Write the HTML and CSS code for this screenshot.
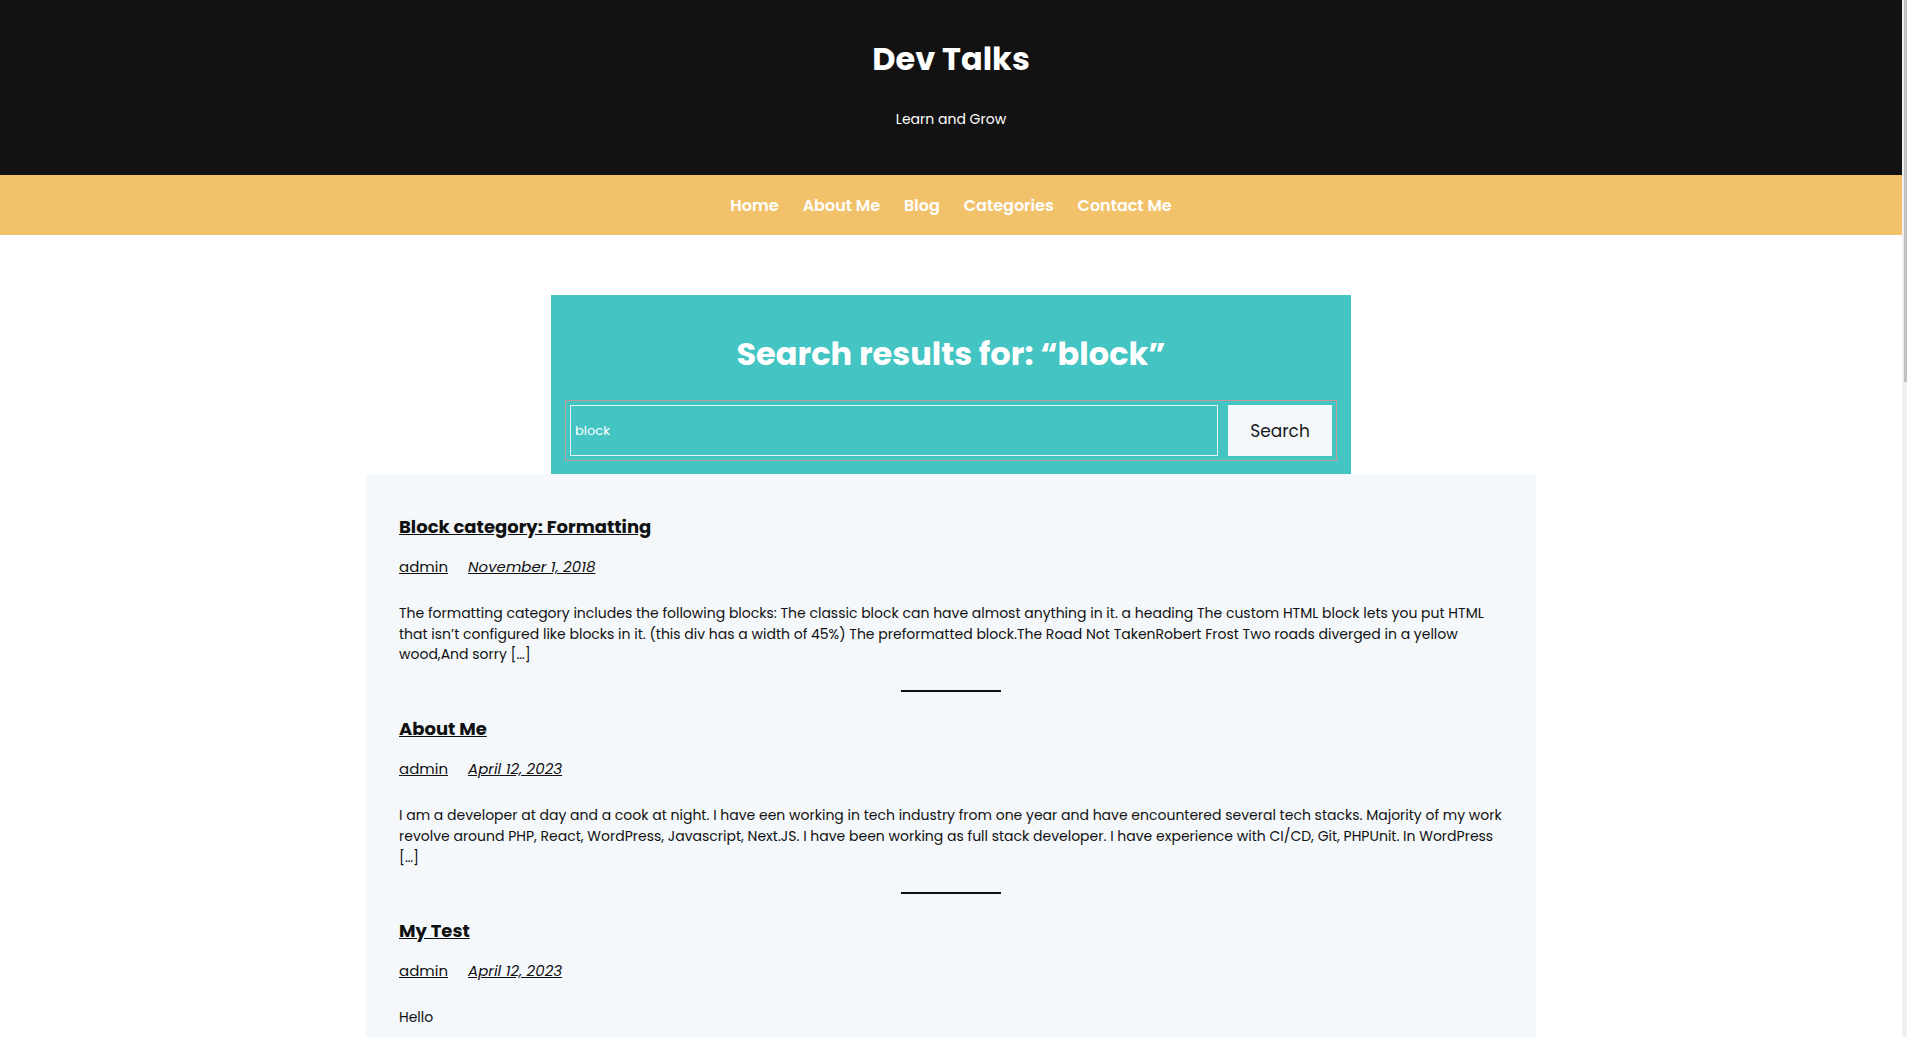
FILE: index.html
```html
<!DOCTYPE html>
<html lang="en">
<head>
<meta charset="utf-8">
<title>Search results for “block” – Dev Talks</title>
<link rel="stylesheet" href="styles.css">
</head>
<body>
<header class="site-header">
  <h1 class="site-title">Dev Talks</h1>
  <p class="site-tagline">Learn and Grow</p>
</header>
<nav class="site-nav">
  <a href="#">Home</a>
  <a href="#">About Me</a>
  <a href="#">Blog</a>
  <a href="#">Categories</a>
  <a href="#">Contact Me</a>
</nav>
<main class="site-main">
  <section class="search-box">
    <h2 class="search-title">Search results for: “block”</h2>
    <form class="search-form">
      <input class="search-input" type="text" value="block">
      <button class="search-button" type="button">Search</button>
    </form>
  </section>
  <section class="results">
    <article class="post">
      <h3 class="post-title"><a href="#">Block category: Formatting</a></h3>
      <div class="post-meta"><a href="#">admin</a><a class="post-date" href="#">November 1, 2018</a></div>
      <p class="post-excerpt">The formatting category includes the following blocks: The classic block can have almost anything in it. a heading The custom HTML block lets you put HTML that isn’t configured like blocks in it. (this div has a width of 45%) The preformatted block.The Road Not TakenRobert Frost Two roads diverged in a yellow wood,And sorry <a class="more" href="#">[…]</a></p>
    </article>
    <hr class="separator">
    <article class="post">
      <h3 class="post-title"><a href="#">About Me</a></h3>
      <div class="post-meta"><a href="#">admin</a><a class="post-date" href="#">April 12, 2023</a></div>
      <p class="post-excerpt">I am a developer at day and a cook at night. I have een working in tech industry from one year and have encountered several tech stacks. Majority of my work revolve around PHP, React, WordPress, Javascript, Next.JS. I have been working as full stack developer. I have experience with CI/CD, Git, PHPUnit. In WordPress <a class="more" href="#">[…]</a></p>
    </article>
    <hr class="separator">
    <article class="post">
      <h3 class="post-title"><a href="#">My Test</a></h3>
      <div class="post-meta"><a href="#">admin</a><a class="post-date" href="#">April 12, 2023</a></div>
      <p class="post-excerpt">Hello</p>
    </article>
  </section>
</main>
<div class="scrollbar"><div class="scrollbar-thumb"></div></div>
</body>
</html>
```
FILE: styles.css
```css
* { box-sizing: border-box; }
html, body { margin: 0; padding: 0; }
body {
  font-family: "Poppins", "Inter", "Open Sans", sans-serif;
  color: #111;
  background: #fff;
  margin-right: 5px;
}
a { color: inherit; }

.scrollbar {
  position: fixed;
  top: 0;
  right: 0;
  width: 5px;
  height: 100vh;
  background: #f0f0f0;
}
.scrollbar-thumb {
  margin-left: 2px;
  width: 3px;
  height: 382px;
  background: #c1c1c1;
}

.site-header {
  background: #121212;
  color: #fff;
  text-align: center;
  padding: 40px 0 44px;
}
.site-title {
  margin: 0;
  font-size: 32px;
  line-height: 38px;
  font-weight: 700;
}
.site-tagline {
  margin: 30px 0 0;
  font-size: 14px;
  line-height: 23px;
}

.site-nav {
  background: #f2c26b;
  height: 60px;
  display: flex;
  justify-content: center;
  align-items: center;
  gap: 24px;
}
.site-nav a {
  color: #fff;
  text-decoration: none;
  font-size: 16px;
  font-weight: 600;
}

.site-main {
  padding-top: 60px;
  display: flex;
  flex-direction: column;
  align-items: center;
}
.search-box {
  width: 800px;
  background: #44c4c2;
  padding: 37px 14px 13px;
  text-align: center;
}
.search-title {
  margin: 0 0 24px;
  color: #fff;
  font-size: 32px;
  line-height: 44px;
  font-weight: 700;
}
.search-form {
  display: flex;
  gap: 10px;
  padding: 4px;
  border: 1px solid #c49a9a;
}
.search-input {
  flex: 1;
  height: 51px;
  background: transparent;
  border: 1px solid #e4f4f4;
  color: #fff;
  font-family: inherit;
  font-size: 13px;
  padding: 0 4px;
  outline: none;
}
.search-button {
  width: 104px;
  height: 51px;
  border: none;
  background: #f4f8fb;
  color: #1a1a1a;
  font-family: inherit;
  font-size: 17px;
}

.results {
  width: 1170px;
  background: #f4f8fb;
  padding: 40px 33px 10px;
}
.post-title {
  margin: 0;
  font-size: 18px;
  line-height: 25px;
  font-weight: 700;
}
.post-meta {
  margin-top: 16px;
  display: flex;
  gap: 20px;
  font-size: 15px;
  line-height: 23px;
}
.post-date { font-style: italic; }
.post-excerpt {
  margin: 25px 0 0;
  font-size: 14px;
  line-height: 20.7px;
}
.more { text-decoration: none; }
.separator {
  width: 100px;
  height: 2px;
  margin: 25px auto 24px;
  border: none;
  background: #111;
}
```
